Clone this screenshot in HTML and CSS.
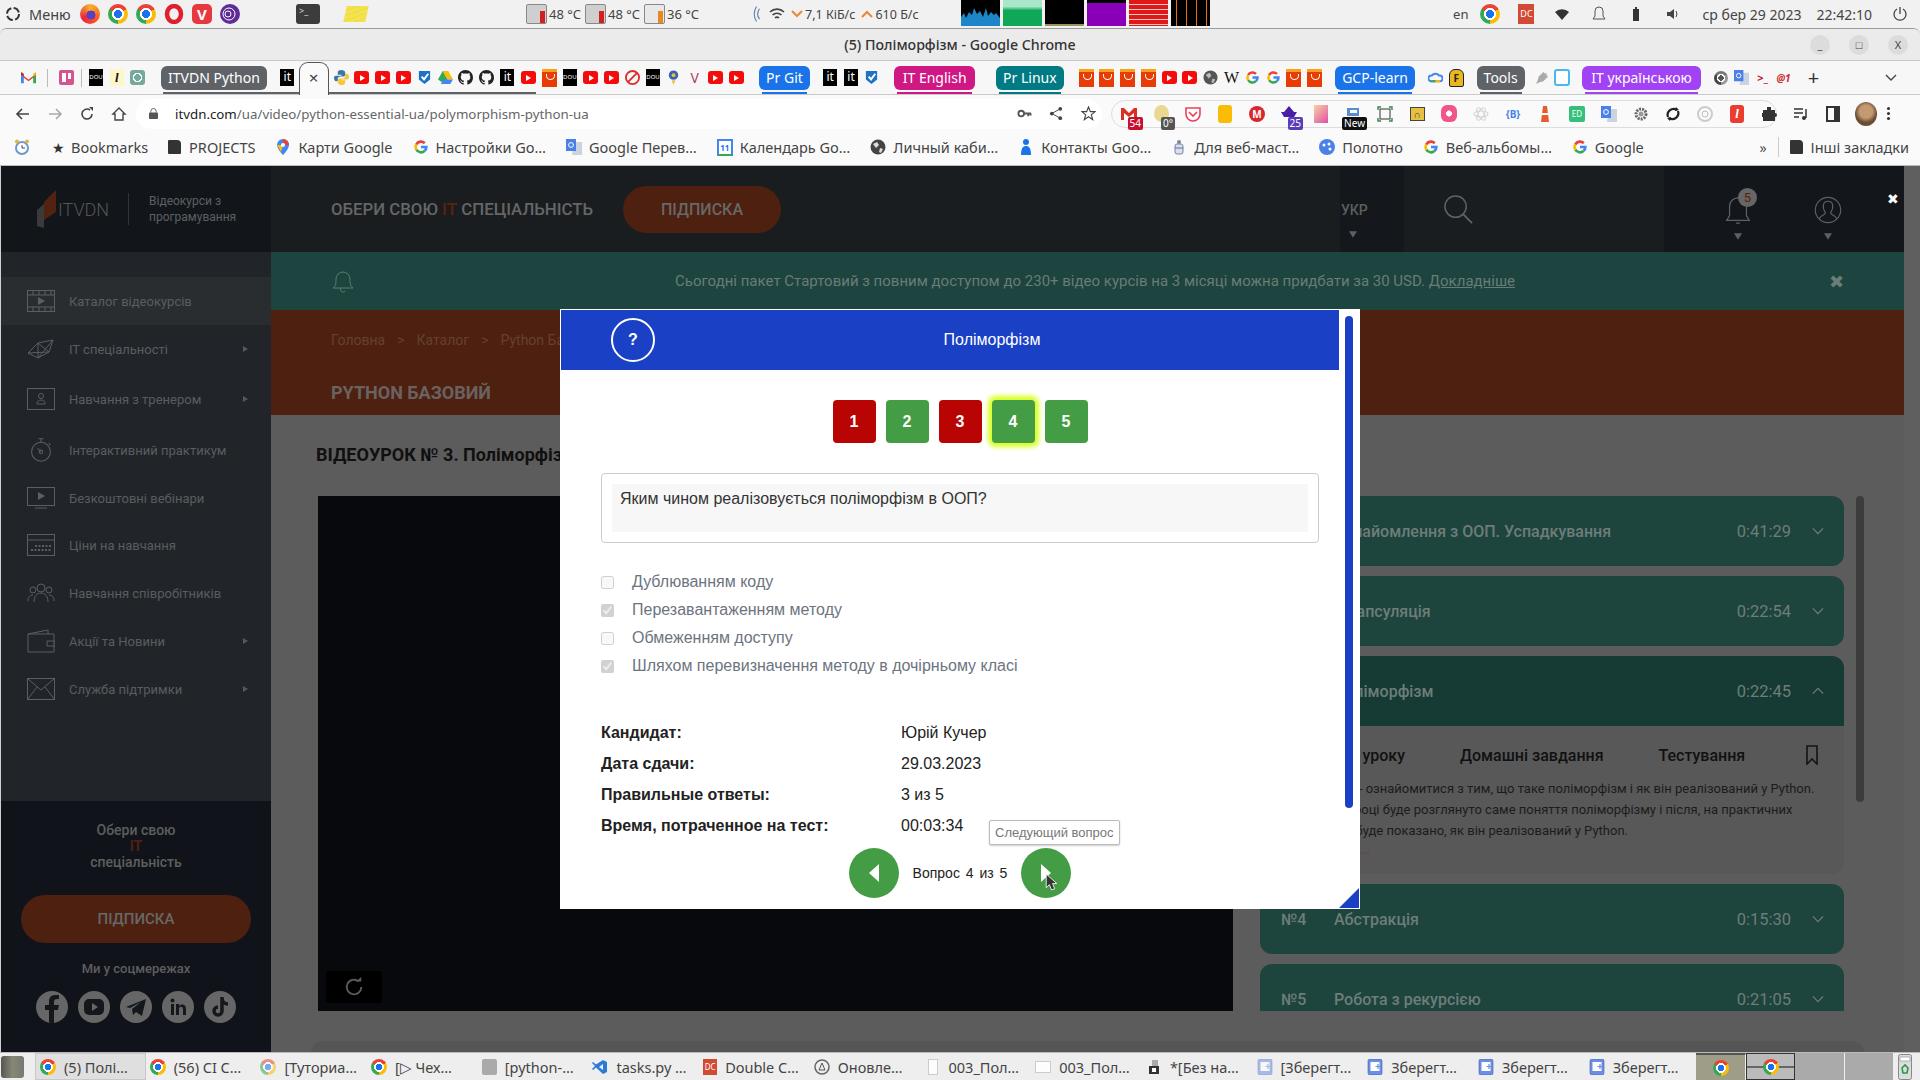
FILE: index.html
```html
<!DOCTYPE html>
<html lang="uk">

<head>
    <meta charset="UTF-8">
    <title>(5) Поліморфізм - Google Chrome</title>
    <link rel="stylesheet" href="styles.css">
</head>

<body>
    <!-- icons used more than once -->
    <svg class="sprite" aria-hidden="true">
        <symbol id="g" viewBox="0 0 24 24">
            <g fill="none" stroke-width="4">
                <path d="M12 12h8a8 8 0 0 1-2.5 5.8" stroke="#4285f4" />
                <path d="M17.5 17.8A8 8 0 0 1 5 16" stroke="#34a853" />
                <path d="M5 16a8 8 0 0 1 0-8" stroke="#fbbc05" />
                <path d="M5 8a8 8 0 0 1 12.6-1.7" stroke="#ea4335" />
            </g>
        </symbol>
        <symbol id="gh" viewBox="0 0 16 16">
            <path fill="#222" d="M8 0C3.58 0 0 3.58 0 8c0 3.54 2.29 6.53 5.47 7.59.4.07.55-.17.55-.38 0-.19-.01-.82-.01-1.49-2.01.37-2.53-.49-2.69-.94-.09-.23-.48-.94-.82-1.13-.28-.15-.68-.52-.01-.53.63-.01 1.08.58 1.23.82.72 1.21 1.87.87 2.33.66.07-.52.28-.87.51-1.07-1.78-.2-3.64-.89-3.64-3.95 0-.87.31-1.59.82-2.15-.08-.2-.36-1.02.08-2.12 0 0 .67-.21 2.2.82.64-.18 1.32-.27 2-.27.68 0 1.36.09 2 .27 1.53-1.04 2.2-.82 2.2-.82.44 1.1.16 1.92.08 2.12.51.56.82 1.27.82 2.15 0 3.07-1.87 3.75-3.65 3.95.29.25.54.73.54 1.48 0 1.07-.01 1.93-.01 2.2 0 .21.15.46.55.38A8.013 8.013 0 0 0 16 8c0-4.42-3.58-8-8-8z" />
        </symbol>
        <symbol id="check" viewBox="0 0 16 16">
            <path fill="#1a73c8" d="M2 1h12v9l-6 5-6-5z" />
            <path fill="none" stroke="#fff" stroke-width="2" d="M5 7l2.5 3L12 4" />
        </symbol>
        <symbol id="trans" viewBox="0 0 16 16">
            <path fill="#ccd3e0" d="M8 3h8v13H6z" />
            <path fill="#4a80e8" d="M0 0h10v12H0z" />
            <circle cx="5" cy="6" r="2.4" fill="none" stroke="#fff" />
        </symbol>
        <symbol id="shot" viewBox="0 0 16 16">
            <rect x="1" y="0" width="14" height="16" rx="2" fill="#6c8ee8" stroke="#46609c" stroke-width=".6" />
            <rect x="3.5" y="3" width="9" height="9" fill="#fff" />
            <path stroke="#6c8ee8" stroke-width="1.2" d="M8.5 7.5h5M11 5v5" />
        </symbol>
        <symbol id="caret" viewBox="0 0 10 8">
            <path fill="#5c6064" d="M0 0h10L5 8z" />
        </symbol>
        <symbol id="chev" viewBox="0 0 14 8">
            <path fill="none" stroke="#6e7f7b" stroke-width="1.4" d="M1 1l6 6 6-6" />
        </symbol>
    </svg>

    <!-- desktop panel -->
    <div class="panel">
        <svg class="mint" viewBox="0 0 16 16">
            <circle cx="8" cy="8" r="6" fill="none" stroke="#333" stroke-width="2" stroke-dasharray="7 2.4" />
        </svg>
        <span class="menu-word">Меню</span>
        <div class="launch">
            <i class="app firefox"></i>
            <i class="chrome big"></i>
            <i class="chrome big"></i>
            <svg class="app" viewBox="0 0 20 20"><ellipse cx="10" cy="10" rx="7" ry="8" fill="none" stroke="#e0202c" stroke-width="4.5" /></svg>
            <span class="app vivaldi">V</span>
            <svg class="app" viewBox="0 0 20 20"><circle cx="10" cy="10" r="10" fill="#5e2b97" /><circle cx="9" cy="10" r="6" fill="none" stroke="#fff" /><circle cx="8" cy="10" r="3" fill="none" stroke="#fff" /></svg>
        </div>
        <span class="term">&gt;_</span>
        <i class="sticky"></i>
        <div class="temps">
            <i class="therm"></i><span>48 °C</span>
            <i class="therm"></i><span>48 °C</span>
            <i class="therm drive"></i><span>36 °C</span>
        </div>
        <div class="net">
            <svg class="wifi-arc" viewBox="0 0 12 24"><path d="M6 2Q0 12 6 22M10 5Q5 12 10 19" fill="none" stroke="#5e7fa8" stroke-width="1.5" /></svg>
            <svg class="wifi" viewBox="0 0 16 16"><path d="M1 6a10 10 0 0 1 14 0M3.5 9a6.5 6.5 0 0 1 9 0M6 12a3 3 0 0 1 4 0" fill="none" stroke="#444" stroke-width="1.6" /></svg>
            <svg class="speed" viewBox="0 0 12 8"><path d="M1 1l5 5 5-5" fill="none" stroke="#e8883a" stroke-width="2" /></svg>
            <span>7,1 КіБ/с</span>
            <svg class="speed" viewBox="0 0 12 8"><path d="M1 7l5-5 5 5" fill="none" stroke="#e8883a" stroke-width="2" /></svg>
            <span>610 Б/с</span>
        </div>
        <div class="graphs">
            <svg class="graph g-cpu" viewBox="0 0 39 26" preserveAspectRatio="none"><path fill="#1c86c8" d="M0 26V17l3-4 2 5 3-6 3 3 2-7 3 6 3-3 3 6 3-9 2 8 3-4 3 3 2-2 4 5v8z" /></svg>
            <i class="graph g-mem"></i>
            <i class="graph g-swap"></i>
            <i class="graph g-load"></i>
            <i class="graph g-net"></i>
            <i class="graph g-disk"></i>
        </div>
        <div class="tray">
            <span class="lang">en</span>
            <i class="chrome big"></i>
            <span class="dc">DC</span>
            <svg class="tray-ic" viewBox="0 0 16 16"><path d="M1 6a10 10 0 0 1 14 0L8 14z" fill="#333" /></svg>
            <svg class="tray-ic" viewBox="0 0 16 16"><path d="M8 1a4 4 0 0 0-4 4v5l-2 3h12l-2-3V5a4 4 0 0 0-4-4z" fill="none" stroke="#555" /></svg>
            <svg class="tray-ic" viewBox="0 0 16 16"><path d="M5 3h6v12H5zM7 1h2v2H7z" fill="#333" /></svg>
            <svg class="tray-ic" viewBox="0 0 16 16"><path d="M2 6h3l4-3v10l-4-3H2z" fill="#444" /><path d="M11 5q2 3 0 6" fill="none" stroke="#444" /></svg>
            <span class="clock-date">ср бер 29 2023</span>
            <span class="clock-time">22:42:10</span>
            <svg class="tray-ic" viewBox="0 0 16 16"><path d="M5 3a6 6 0 1 0 6 0M8 1v7" fill="none" stroke="#444" stroke-width="1.3" /></svg>
        </div>
    </div>

    <!-- browser window -->
    <div class="window">
        <div class="titlebar">
            <span class="win-title">(5) Поліморфізм - Google Chrome</span>
            <div class="win-btns">
                <span class="win-btn">_</span>
                <span class="win-btn">□</span>
                <span class="win-btn">X</span>
            </div>
        </div>

        <div class="tabstrip">
            <span class="fav"><svg viewBox="0 0 16 12"><path fill="#ea4335" d="M0 2l8 6 8-6v2L8 10 0 4z" /><path fill="#4285f4" d="M0 3v9h3V5z" /><path fill="#34a853" d="M16 3v9h-3V5z" /><path fill="#fbbc05" d="M13 2l3-2v3l-3 2z" /><path fill="#c5221f" d="M0 0l3 2v3L0 3z" /></svg></span>
            <i class="sep"></i>
            <span class="fav"><i class="trello"></i></span>
            <i class="sep tight"></i>
            <span class="fav"><i class="dou">DOU</i></span>
            <span class="fav"><i class="lfav">l</i></span>
            <span class="fav"><i class="gpt"></i></span>
            <div class="grp">
                <span class="pill p-grey">ITVDN Python</span>
                <span class="fav"><i class="it">it</i></span>
                <div class="tab-active">×</div>
                <span class="fav"><svg viewBox="0 0 16 16"><path fill="#3b78a8" d="M8 0C5 0 4 1 4 3v2h4v1H2C0 6 0 8 0 9s1 3 2 3h2v-2c0-2 1-3 3-3h3c1 0 2-1 2-2V3c0-2-2-3-4-3z" /><path fill="#f6c838" d="M8 16c3 0 4-1 4-3v-2H8v-1h6c2 0 2-2 2-3s-1-3-2-3h-2v2c0 2-1 3-3 3H6c-1 0-2 1-2 2v2c0 2 2 3 4 3z" /></svg></span>
                <span class="fav"><i class="yt"></i></span>
                <span class="fav"><i class="yt"></i></span>
                <span class="fav"><i class="yt"></i></span>
                <span class="fav"><svg><use href="#check" /></svg></span>
                <span class="fav"><svg viewBox="0 0 16 14"><path fill="#fbbc05" d="M5 0h6l5 9h-6z" /><path fill="#34a853" d="M5 0l5 9-3 5-7-5z" /><path fill="#4285f4" d="M3 14l3-5h10l-3 5z" /></svg></span>
                <span class="fav"><svg><use href="#gh" /></svg></span>
                <span class="fav"><svg><use href="#gh" /></svg></span>
                <span class="fav"><i class="it">it</i></span>
                <span class="fav"><i class="yt"></i></span>
            </div>
            <span class="fav"><i class="ali"></i></span>
            <span class="fav"><i class="dou">DOU</i></span>
            <span class="fav"><i class="yt"></i></span>
            <span class="fav"><i class="yt"></i></span>
            <span class="fav"><svg viewBox="0 0 16 16"><circle cx="8" cy="8" r="7" fill="none" stroke="#d8302c" stroke-width="2" /><path d="M3 13L13 3" stroke="#d8302c" stroke-width="2" /></svg></span>
            <span class="fav"><i class="dou">DOU</i></span>
            <span class="fav"><svg viewBox="0 0 12 16"><circle cx="6" cy="5.5" r="5" fill="#3a64b0" /><circle cx="6" cy="5.5" r="2" fill="#f0c040" /><path fill="#e0c050" d="M4 11h4l-2 5z" /></svg></span>
            <span class="fav"><span class="v-fav">V</span></span>
            <span class="fav"><i class="yt"></i></span>
            <span class="fav"><i class="yt"></i></span>
            <span class="pill p-blue pr-git">Pr Git</span>
            <span class="fav"><i class="it">it</i></span>
            <span class="fav"><i class="it">it</i></span>
            <span class="fav"><svg><use href="#check" /></svg></span>
            <span class="pill p-pink">IT English</span>
            <span class="pill p-teal">Pr Linux</span>
            <span class="fav"><i class="ali"></i></span>
            <span class="fav"><i class="ali"></i></span>
            <span class="fav"><i class="ali"></i></span>
            <span class="fav"><i class="ali"></i></span>
            <span class="fav"><i class="yt"></i></span>
            <span class="fav"><i class="yt"></i></span>
            <span class="fav"><svg viewBox="0 0 16 16"><circle cx="8" cy="8" r="7.5" fill="#555" /><path fill="#bbb" d="M3 5l4-2 2 3-3 3zM10 9l3 1-2 4-2-1z" /></svg></span>
            <span class="fav"><span class="wiki">W</span></span>
            <span class="fav"><svg><use href="#g" /></svg></span>
            <span class="fav"><svg><use href="#g" /></svg></span>
            <span class="fav"><i class="ali"></i></span>
            <span class="fav"><i class="ali"></i></span>
            <span class="pill p-blue">GCP-learn</span>
            <span class="fav"><svg viewBox="0 0 16 16"><path d="M3 12a3 3 0 0 1 1-6 5 5 0 0 1 8 0 3 3 0 0 1 1 6z" fill="none" stroke="#4285f4" stroke-width="2" /><path d="M3 12h5" stroke="#34a853" stroke-width="2" /><path d="M8 12h5" stroke="#fbbc05" stroke-width="2" /></svg></span>
            <span class="fav"><span class="f-fav">F</span></span>
            <span class="pill p-grey tools">Tools</span>
            <span class="fav"><svg viewBox="0 0 16 16"><path fill="#aaa" d="M2 15l2-4 1-4 5-5 2 2 2-1-1 2 2 2-5 5-4 1z" /></svg></span>
            <span class="fav"><i class="note-fav"></i></span>
            <span class="pill p-violet">IT українською</span>
            <span class="fav"><i class="chrome grey"></i></span>
            <span class="fav"><svg><use href="#trans" /></svg></span>
            <span class="fav"><span class="term-fav">&gt;_</span></span>
            <span class="fav"><span class="red-fav">@1</span></span>
            <span class="newtab">+</span>
            <svg class="tab-menu" viewBox="0 0 12 8"><path d="M1 1l5 5 5-5" fill="none" stroke="#444" stroke-width="1.4" /></svg>
        </div>

        <div class="toolbar">
            <svg class="tool" viewBox="0 0 16 16"><path d="M14 8H2M7 3L2 8l5 5" fill="none" stroke="#444" stroke-width="1.6" /></svg>
            <svg class="tool" viewBox="0 0 16 16"><path d="M2 8h12M9 3l5 5-5 5" fill="none" stroke="#aaa" stroke-width="1.6" /></svg>
            <svg class="tool" viewBox="0 0 16 16"><path d="M13 8a5 5 0 1 1-2-4" fill="none" stroke="#444" stroke-width="1.6" /><path d="M10 1h4v4z" fill="#444" /></svg>
            <svg class="tool" viewBox="0 0 16 16"><path d="M8 2L2 8h2v6h8V8h2z" fill="none" stroke="#444" stroke-width="1.4" /></svg>
            <div class="omnibox">
                <svg class="lock" viewBox="0 0 10 12"><path d="M2 5V3.5a3 3 0 0 1 6 0V5" fill="none" stroke="#555" /><rect y="5" width="10" height="7" rx="1" fill="#555" /></svg>
                <span class="url"><b>itvdn.com</b>/ua/video/python-essential-ua/polymorphism-python-ua</span>
                <svg class="omni-ic key" viewBox="0 0 16 16"><circle cx="4.5" cy="8" r="3" fill="none" stroke="#555" stroke-width="2" /><path d="M7 8h8M12 8v3M14.5 8v2" stroke="#555" stroke-width="2" /></svg>
                <svg class="omni-ic" viewBox="0 0 16 16"><circle cx="12" cy="3" r="2" fill="#444" /><circle cx="12" cy="13" r="2" fill="#444" /><circle cx="3" cy="8" r="2" fill="#444" /><path d="M12 3L3 8l9 5" fill="none" stroke="#444" /></svg>
                <svg class="omni-ic" viewBox="0 0 16 16"><path d="M8 1l2 5h5l-4 3.5 1.5 5L8 11.500 3.500 14.500 5 9.500 1 6h5z" fill="none" stroke="#444" stroke-width="1.2" /></svg>
            </div>
            <div class="ext-bar">
                <span class="ext"><svg viewBox="0 0 16 12"><path fill="#d93025" d="M0 0h3l5 5 5-5h3v12h-3V5L8 9 3 5v7H0z" /></svg><em class="badge b-red">54</em></span>
                <span class="ext"><i class="moon"></i><em class="badge b-grey">0°</em></span>
                <span class="ext"><svg viewBox="0 0 16 16"><path d="M1 2h14v6a7 7 0 0 1-14 0z" fill="#fff" stroke="#ef3f56" stroke-width="1.6" /><path d="M4 6l4 4 4-4" fill="none" stroke="#ef3f56" stroke-width="1.6" /></svg></span>
                <span class="ext"><i class="keep"></i></span>
                <span class="ext"><i class="mega">M</i></span>
                <span class="ext"><svg viewBox="0 0 16 16"><path fill="#4a1fa8" d="M8 0l5 6h3l-3 5H3L0 6h3z" /></svg><em class="badge b-violet">25</em></span>
                <span class="ext"><i class="grad"></i></span>
                <span class="ext"><svg viewBox="0 0 16 12"><path fill="#5a8cd0" d="M2 0h12v8H2z" /><path fill="#fff" d="M5 2h7v3H5z" /></svg><em class="badge b-black">New</em></span>
                <span class="ext"><svg viewBox="0 0 16 16"><path d="M1 4V1h3M12 1h3v3M15 12v3h-3M4 15H1v-3" fill="none" stroke="#2a8a4a" stroke-width="1.4" /><rect x="3" y="3" width="10" height="10" fill="none" stroke="#333" /></svg></span>
                <span class="ext"><i class="folder-ext">∩</i></span>
                <span class="ext"><i class="pink-ext"></i></span>
                <span class="ext"><svg viewBox="0 0 16 16"><g fill="none" stroke="#d5d5d5" stroke-width="1.2"><ellipse cx="8" cy="8" rx="7" ry="3" /><ellipse cx="8" cy="8" rx="7" ry="3" transform="rotate(60 8 8)" /><ellipse cx="8" cy="8" rx="7" ry="3" transform="rotate(120 8 8)" /></g></svg></span>
                <span class="ext"><i class="bi-ext">{B}</i></span>
                <span class="ext"><svg viewBox="0 0 12 16"><path fill="#e85a30" d="M4 0h4l2 16H2z" /><path fill="#fff" d="M3 7h6v2H3z" /></svg></span>
                <span class="ext"><i class="ed-ext">ED</i></span>
                <span class="ext"><svg><use href="#trans" /></svg></span>
                <span class="ext"><svg viewBox="0 0 16 16"><circle cx="8" cy="8" r="5" fill="none" stroke="#666" stroke-width="3" stroke-dasharray="2 1" /><circle cx="8" cy="8" r="2.5" fill="#999" /></svg></span>
                <span class="ext"><svg viewBox="0 0 16 16"><path d="M3 11a6 6 0 0 1 9-7M13 5a6 6 0 0 1-9 7" fill="none" stroke="#222" stroke-width="2.2" /><path d="M11 1l3 3-4 1zM5 15l-3-3 4-1z" fill="#222" /></svg></span>
                <span class="ext"><svg viewBox="0 0 16 16"><circle cx="8" cy="8" r="7" fill="none" stroke="#ccc" stroke-width="2" /><circle cx="8" cy="8" r="3" fill="none" stroke="#bbb" /></svg></span>
                <span class="ext"><i class="lfav red">l</i></span>
                <span class="ext"><svg viewBox="0 0 16 16"><path fill="#333" d="M6 1h4v3h4v3a2 2 0 0 1 0 4v4H2v-4H1V7h1V4h4z" /></svg></span>
            </div>
            <svg class="tool-r" viewBox="0 0 16 16"><path d="M1 3h9M1 7h9M1 11h5" stroke="#333" stroke-width="1.5" /><path d="M13 3v9" stroke="#333" stroke-width="1.5" /><circle cx="11" cy="12" r="2" fill="#333" /></svg>
            <i class="side-panel-ic"></i>
            <i class="avatar"></i>
            <i class="dots"></i>
        </div>

        <div class="bookmarks">
            <span class="bm"><svg class="bm-ic" viewBox="0 0 16 16"><circle cx="8" cy="9" r="6" fill="#fff" stroke="#6a9ad0" stroke-width="2" /><path d="M8 6v3h3" stroke="#445" fill="none" /><circle cx="3" cy="2.5" r="2" fill="#e8b040" /><circle cx="13" cy="2.5" r="2" fill="#e8b040" /></svg></span>
            <span class="bm"><span class="bm-star">★</span>Bookmarks</span>
            <span class="bm"><i class="folder"></i>PROJECTS</span>
            <span class="bm"><svg class="bm-ic" viewBox="0 0 12 16"><path d="M6 0a6 6 0 0 0-6 6c0 4 6 10 6 10s6-6 6-10a6 6 0 0 0-6-6z" fill="#4285f4" /><path d="M6 0a6 6 0 0 1 6 6H6z" fill="#ea4335" /><path d="M0 6h6l-2 7z" fill="#fbbc05" /><circle cx="6" cy="6" r="2" fill="#fff" /></svg>Карти Google</span>
            <span class="bm"><svg class="bm-ic"><use href="#g" /></svg>Настройки Go…</span>
            <span class="bm"><svg class="bm-ic"><use href="#trans" /></svg>Google Перев…</span>
            <span class="bm"><i class="cal">11</i>Календарь Go…</span>
            <span class="bm"><svg class="bm-ic" viewBox="0 0 16 16"><circle cx="8" cy="8" r="7.5" fill="#444" /><path fill="#ddd" d="M3 5l4-2 2 3-3 3zM10 9l3 1-2 4-2-1z" /></svg>Личный каби…</span>
            <span class="bm"><svg class="bm-ic" viewBox="0 0 12 16"><circle cx="6" cy="3" r="3" fill="#1a73e8" /><path d="M1 16c0-7 2-9 5-9s5 2 5 9z" fill="#1a73e8" /></svg>Контакты Goo…</span>
            <span class="bm"><svg class="bm-ic" viewBox="0 0 12 16"><rect x="2" y="5" width="8" height="10" rx="2" fill="#dde" stroke="#789" /><circle cx="6" cy="3" r="2" fill="#789" /><path d="M2 9h8" stroke="#47a" /></svg>Для веб-маст…</span>
            <span class="bm"><svg class="bm-ic" viewBox="0 0 16 16"><circle cx="8" cy="8" r="8" fill="#4a80e8" /><circle cx="5" cy="6" r="1.5" fill="#fff" /><circle cx="10" cy="5" r="1.5" fill="#fff" /><circle cx="11" cy="10" r="1.5" fill="#fff" /></svg>Полотно</span>
            <span class="bm"><svg class="bm-ic"><use href="#g" /></svg>Веб-альбомы…</span>
            <span class="bm"><svg class="bm-ic"><use href="#g" /></svg>Google</span>
            <span class="bm-more">»</span>
            <span class="bm bm-other"><i class="folder"></i>Інші закладки</span>
        </div>

        <div class="page">
            <aside class="side">
                <div class="logo">
                    <svg class="logo-mark" viewBox="0 0 20 38"><path fill="#532312" d="M7 12L19 0v22L7 30z" /><path fill="#3a3a3a" d="M0 20l7-6v24l-7-2z" /></svg>
                    <span class="logo-word">ITVDN</span>
                    <i class="logo-line"></i>
                    <span class="logo-sub">Відеокурси з<br>програмування</span>
                </div>
                <nav class="side-nav">
                    <a class="nav-row active"><svg viewBox="0 0 28 22"><g fill="none" stroke="#5b5f63"><rect x=".5" y=".5" width="27" height="21" /><path d="M0 5h28M0 17h28M6 0v5M12 0v5M18 0v5M24 0v5M6 17v5M12 17v5M18 17v5M24 17v5" /></g><path fill="#5b5f63" d="M11 7l7 4-7 4z" /></svg>Каталог відеокурсів</a>
                    <a class="nav-row"><svg viewBox="0 0 28 22"><path fill="none" stroke="#5b5f63" d="M1 15L11 5l15-3-4 12-11 6zM11 5l0 15M11 5l11 9M1 15l21-1M26 2L11 20" /></svg>ІТ спеціальності<i class="nav-arrow"></i></a>
                    <a class="nav-row h52"><svg viewBox="0 0 28 22"><g fill="none" stroke="#5b5f63"><rect x=".5" y=".5" width="27" height="21" /><circle cx="14" cy="8" r="2.5" /><path d="M10 16c0-3 2-4 4-4s4 1 4 4z" /></g></svg>Навчання з тренером<i class="nav-arrow"></i></a>
                    <a class="nav-row h50"><svg viewBox="0 0 28 28"><g fill="none" stroke="#5b5f63" stroke-width="1.2"><circle cx="14" cy="16" r="11" /><path d="M11 1h6M14 1v4M23 6l2 2M14 16l-4-4" /><circle cx="14" cy="16" r="2" /></g></svg>Інтерактивний практикум</a>
                    <a class="nav-row h46"><svg viewBox="0 0 28 22"><g fill="none" stroke="#5b5f63"><rect x=".5" y=".5" width="27" height="18" /><path d="M8 21h12" /></g><path fill="#5b5f63" d="M11 5l7 4-7 4z" /></svg>Безкоштовні вебінари</a>
                    <a class="nav-row"><svg viewBox="0 0 28 22"><g fill="none" stroke="#5b5f63"><rect x=".5" y=".5" width="27" height="21" /><path d="M0 6h28" /><path stroke-dasharray="2 1.5" stroke-width="2" d="M4 16h20M8 12h16" /></g></svg>Ціни на навчання</a>
                    <a class="nav-row"><svg viewBox="0 0 28 22"><g fill="none" stroke="#5b5f63"><circle cx="14" cy="6" r="4" /><circle cx="6" cy="8" r="3" /><circle cx="22" cy="8" r="3" /><path d="M7 20c0-6 3-9 7-9s7 3 7 9M1 19c0-4 2-6 5-6M27 19c0-4-2-6-5-6" /></g></svg>Навчання співробітників</a>
                    <a class="nav-row"><svg viewBox="0 0 28 24"><g fill="none" stroke="#5b5f63"><path d="M1 5h26v18H1zM1 5l20-4v4" /><path d="M20 12h8v5h-8z" /></g></svg>Акції та Новини<i class="nav-arrow"></i></a>
                    <a class="nav-row"><svg viewBox="0 0 28 22"><g fill="none" stroke="#5b5f63"><rect x=".5" y=".5" width="27" height="21" /><path d="M0 0l14 12L28 0M0 22l10-13M28 22L18 9" /></g></svg>Служба підтримки<i class="nav-arrow"></i></a>
                </nav>
                <div class="side-foot">
                    <p class="foot-title">Обери свою<br><b>ІТ</b><br>спеціальність</p>
                    <a class="sub-btn foot-btn">ПІДПИСКА</a>
                    <p class="foot-soc">Ми у соцмережах</p>
                    <div class="socials">
                        <span class="soc"><svg viewBox="0 0 32 32"><path fill="#14181c" d="M18 32V19h4l1-5h-5v-3c0-2 1-3 3-3h2V4h-4c-4 0-6 3-6 6v4H9v5h4v13z" /></svg></span>
                        <span class="soc"><svg viewBox="0 0 32 32"><rect x="6" y="8" width="20" height="16" rx="5" fill="#14181c" /><path fill="#666" d="M14 12l6 4-6 4z" /></svg></span>
                        <span class="soc"><svg viewBox="0 0 32 32"><path fill="#14181c" d="M6 16L26 8l-4 17-6-4-3 3-1-6 9-7-11 6z" /></svg></span>
                        <span class="soc"><svg viewBox="0 0 32 32"><path fill="#14181c" d="M9 13h3v11H9zM14 13h3v2c1-2 7-3 7 3v6h-3v-6c0-3-4-3-4 0v6h-3z" /><circle cx="10.5" cy="9.5" r="2" fill="#14181c" /></svg></span>
                        <span class="soc"><svg viewBox="0 0 32 32"><path fill="none" stroke="#14181c" stroke-width="3.5" d="M18 6v14a4 4 0 1 1-4-4M18 7c0 4 3 6 6 6" /></svg></span>
                    </div>
                </div>
            </aside>

            <main class="main">
                <header class="head">
                    <div class="head-menu">
                        <span class="choose">ОБЕРИ СВОЮ <b>ІТ</b> СПЕЦІАЛЬНІСТЬ</span>
                        <a class="sub-btn head-btn">ПІДПИСКА</a>
                    </div>
                    <div class="head-lang">УКР<svg><use href="#caret" /></svg></div>
                    <div class="head-search"><svg viewBox="0 0 32 32"><circle cx="13" cy="13" r="11" fill="none" stroke="#5e6266" stroke-width="1.5" /><path d="M21 21l9 9" stroke="#5e6266" stroke-width="2" /></svg></div>
                    <div class="head-user">
                        <div class="head-ic"><svg viewBox="0 0 28 32"><path d="M2 27l3-5V12a9 9 0 0 1 18 0v10l3 5zM12 30h4" fill="none" stroke="#5e6266" stroke-width="1.3" /></svg><em class="bell-count">5</em><svg class="ic-caret"><use href="#caret" /></svg></div>
                        <div class="head-ic"><svg viewBox="0 0 32 32"><circle cx="16" cy="16" r="14.5" fill="none" stroke="#5e6266" stroke-width="1.3" /><path d="M6 26c2-5 7-4 7-7-4-6-3-13 3-13s7 7 3 13c0 3 5 2 7 7" fill="none" stroke="#5e6266" stroke-width="1.3" /></svg><svg class="ic-caret"><use href="#caret" /></svg></div>
                    </div>
                </header>
                <div class="notice">
                    <svg class="notice-bell" viewBox="0 0 22 24"><path d="M1 19c3-2 3-5 3-9a7 7 0 0 1 14 0c0 4 0 7 3 9zM9 19a2 2 0 0 0 4 3" fill="none" stroke="#5b7d76" /></svg>
                    <span class="notice-text">Сьогодні пакет Стартовий з повним доступом до 230+ відео курсів на 3 місяці можна придбати за 30 USD. <u>Докладніше</u></span>
                    <span class="notice-x">✖</span>
                </div>
                <div class="hero">
                    <div class="crumbs"><span>Головна</span><span>&gt;</span><span>Каталог</span><span>&gt;</span><span>Python Базовий</span></div>
                    <h2 class="hero-title">PYTHON БАЗОВИЙ</h2>
                </div>
                <div class="content">
                    <h1 class="lesson-title">ВІДЕОУРОК № 3. Поліморфізм</h1>
                    <div class="lesson-row">
                        <div class="video">
                            <div class="replay"><svg viewBox="0 0 22 22"><path d="M19 11a8 8 0 1 1-3-6.2" fill="none" stroke="#5c5c5c" stroke-width="2" /><path d="M13 5h6V0z" fill="#5c5c5c" /></svg></div>
                        </div>
                        <div class="lessons">
                            <div class="lesson"><span class="num">№1</span><span class="name">Ознайомлення з ООП. Успадкування</span><span class="time">0:41:29</span><svg class="chev"><use href="#chev" /></svg></div>
                            <div class="lesson"><span class="num">№2</span><span class="name">Інкапсуляція</span><span class="time">0:22:54</span><svg class="chev"><use href="#chev" /></svg></div>
                            <div class="lesson open"><span class="num">№3</span><span class="name">Поліморфізм</span><span class="time">0:22:45</span><svg class="chev up"><use href="#chev" /></svg></div>
                            <div class="lesson-body">
                                <div class="lesson-tabs">
                                    <span class="first">Опис уроку</span>
                                    <span>Домашні завдання</span>
                                    <span>Тестування</span>
                                    <svg class="mark" viewBox="0 0 12 20"><path d="M1 1h10v18l-5-5-5 5z" fill="none" stroke="#151515" stroke-width="1.6" /></svg>
                                </div>
                                <p class="lesson-desc">Мета уроку - ознайомитися з тим, що таке поліморфізм і як він реалізований у Python.<br>На цьому уроці буде розглянуто саме поняття поліморфізму і після, на практичних<br>прикладах буде показано, як він реалізований у Python.</p>
                                <span class="lesson-more">...</span>
                            </div>
                            <div class="lesson"><span class="num">№4</span><span class="name">Абстракція</span><span class="time">0:15:30</span><svg class="chev"><use href="#chev" /></svg></div>
                            <div class="lesson"><span class="num">№5</span><span class="name">Робота з рекурсією</span><span class="time">0:21:05</span><svg class="chev"><use href="#chev" /></svg></div>
                        </div>
                        <i class="list-scroll"></i>
                    </div>
                    <div class="next-block"></div>
                </div>
            </main>
            <div class="page-scroll"></div>

            <span class="overlay-x">✖</span>

            <!-- test result modal -->
            <section class="modal">
                <div class="modal-head">
                    <span class="help">?</span>
                    <span class="modal-title">Поліморфізм</span>
                </div>
                <div class="modal-body">
                    <div class="steps">
                        <button class="step bad">1</button>
                        <button class="step good">2</button>
                        <button class="step bad">3</button>
                        <button class="step good current">4</button>
                        <button class="step good">5</button>
                    </div>
                    <div class="question">
                        <div class="question-text">Яким чином реалізовується поліморфізм в ООП?</div>
                    </div>
                    <ul class="answers">
                        <li><input type="checkbox" disabled>Дублюванням коду</li>
                        <li><input type="checkbox" disabled checked>Перезавантаженням методу</li>
                        <li><input type="checkbox" disabled>Обмеженням доступу</li>
                        <li><input type="checkbox" disabled checked>Шляхом перевизначення методу в дочірньому класі</li>
                    </ul>
                    <div class="result">
                        <b>Кандидат:</b><span>Юрій Кучер</span>
                        <b>Дата сдачи:</b><span>29.03.2023</span>
                        <b>Правильные ответы:</b><span>3 из 5</span>
                        <b>Время, потраченное на тест:</b><span>00:03:34</span>
                    </div>
                    <div class="pager">
                        <a class="round prev"></a>
                        <span class="pager-text">Вопрос 4 из 5</span>
                        <a class="round next"></a>
                    </div>
                </div>
                <i class="modal-scroll"></i>
                <i class="modal-corner"></i>
                <span class="hint">Следующий вопрос</span>
                <svg class="cursor" viewBox="0 0 12 18"><path d="M1 1v13l3-3 2 5 3-1-2-5h4z" fill="#333" stroke="#fff" stroke-width=".8" /></svg>
            </section>
        </div>
    </div>

    <!-- bottom task bar -->
    <div class="taskbar">
        <i class="show-desktop"></i>
        <div class="tasks">
            <span class="task cur"><i class="chrome"></i><span>(5) Полі…</span></span>
            <span class="task"><i class="chrome"></i><span>(56) CI C…</span></span>
            <span class="task"><i class="chrome pale"></i><span>[Туториа…</span></span>
            <span class="task"><i class="chrome"></i><span>[▷ Чех…</span></span>
            <span class="task"><i class="t-folder"></i><span>[python-…</span></span>
            <span class="task"><svg viewBox="0 0 16 16"><path fill="#2a7ad8" d="M11 1l4 2v10l-4 2-7-6.5-3 2.5-1-1 3-3-3-3 1-1 3 2.5zM11 5L7 8l4 3z" /></svg><span>tasks.py …</span></span>
            <span class="task"><i class="dc small">DC</i><span>Double C…</span></span>
            <span class="task"><svg viewBox="0 0 16 16"><circle cx="8" cy="8" r="7" fill="none" stroke="#666" stroke-width="1.5" /><path d="M8 4l3 7H5z" fill="none" stroke="#555" /></svg><span>Оновле…</span></span>
            <span class="task"><i class="t-file"></i><span>003_Пол…</span></span>
            <span class="task"><i class="t-file wide"></i><span>003_Пол…</span></span>
            <span class="task"><svg viewBox="0 0 16 16"><path fill="#333" d="M3 7h10v8H3z" /><path fill="#aaa" d="M6 1h6v6H6z" /><rect x="6" y="9" width="4" height="4" fill="#fff" /></svg><span>*[Без на…</span></span>
            <span class="task"><svg class="pale-ic"><use href="#shot" /></svg><span>[Зберегт…</span></span>
            <span class="task"><svg><use href="#shot" /></svg><span>Зберегт…</span></span>
            <span class="task"><svg><use href="#shot" /></svg><span>Зберегт…</span></span>
            <span class="task"><svg><use href="#shot" /></svg><span>Зберегт…</span></span>
        </div>
        <div class="spaces">
            <span class="space on"><i class="chrome"></i></span>
            <span class="space grid"><i class="chrome"></i></span>
            <span class="space"></span>
            <span class="space"></span>
        </div>
        <svg class="trash" viewBox="0 0 14 26"><rect x=".5" y=".5" width="13" height="25" rx="2" fill="#ddd" stroke="#888" /><rect x="2" y="3" width="10" height="4" fill="#fff" stroke="#888" stroke-width=".6" /><path d="M4 14l3-3 3 3-1 5H5z" fill="none" stroke="#2a9a4a" stroke-width="1.6" /></svg>
    </div>
</body>

</html>
```

FILE: styles.css
```css
* {
    margin: 0;
    padding: 0;
    box-sizing: border-box;
}

body {
    width: 1920px;
    height: 1080px;
    overflow: hidden;
    display: flex;
    flex-direction: column;
    background-color: #eee;
    font-family: 'Noto Sans', sans-serif;
    font-size: 13px;
    color: #444;
}

i,
em {
    font-style: normal;
    display: block;
}

svg {
    display: block;
}

.sprite {
    display: none;
}

/* desktop panel */
.panel {
    height: 28px;
    flex: none;
    display: flex;
    align-items: center;
    padding-left: 5px;
    background-color: #f1f1f1;
    font-size: 13px;
}

.mint {
    width: 16px;
    height: 16px;
}

.menu-word {
    margin-left: 8px;
    width: 41px;
    font-size: 14.5px;
}

.launch {
    display: flex;
    gap: 8px;
    margin-left: 10px;
}

.app {
    width: 20px;
    height: 20px;
    flex: none;
}

.firefox {
    border-radius: 50%;
    background: radial-gradient(circle at 55% 55%, #5a3fc0 0 28%, transparent 30%), conic-gradient(#f7b22e, #ff5a20, #e8263f, #f7b22e);
}

.vivaldi {
    display: flex;
    align-items: center;
    justify-content: center;
    background-color: #e8383f;
    border-radius: 5px;
    color: #fff;
    font-weight: 700;
    font-size: 15px;
}

/* chrome logo as a conic gradient */
.chrome {
    width: 16px;
    height: 16px;
    flex: none;
    border-radius: 50%;
    background: radial-gradient(circle, #1a73e8 0 27%, #fff 29% 42%, transparent 44%), conic-gradient(#ea4335 0 60deg, #fbbc05 60deg 180deg, #34a853 180deg 300deg, #ea4335 300deg);
}

.chrome.big {
    width: 20px;
    height: 20px;
}

.chrome.pale {
    opacity: 0.55;
}

.chrome.grey {
    width: 14px;
    height: 14px;
    background: radial-gradient(circle, #555 0 27%, #fff 29% 42%, transparent 44%), conic-gradient(#777 0 60deg, #999 60deg 180deg, #444 180deg 300deg, #777 300deg);
}

.term {
    width: 24px;
    height: 20px;
    margin-left: 56px;
    padding-left: 3px;
    background-color: #3c3c3c;
    border-radius: 3px;
    color: #ddd;
    font-size: 9px;
    line-height: 14px;
}

.sticky {
    width: 22px;
    height: 16px;
    margin-left: 25px;
    background: repeating-linear-gradient(160deg, #f6e24c 0 3px, #ece04a 3px 5px);
    transform: skewX(-12deg);
}

.temps {
    display: flex;
    align-items: center;
    margin-left: 159px;
    font-size: 13px;
}

.temps span {
    margin-left: 2px;
    width: 36px;
}

.therm {
    width: 21px;
    height: 20px;
    border: 1px solid #888;
    border-radius: 2px;
    background: linear-gradient(#d02020, #d02020) 13px 6px / 5px 12px no-repeat, #cfcfcf;
}

.therm.drive {
    background: linear-gradient(#e88820, #e88820) 13px 6px / 5px 12px no-repeat, #e8e8e8;
}

.net {
    display: flex;
    align-items: center;
    margin-left: 49px;
    width: 204px;
    font-size: 12.5px;
}

.wifi-arc {
    width: 9px;
    height: 24px;
}

.wifi {
    width: 16px;
    height: 16px;
    margin-left: 8px;
}

.speed {
    width: 12px;
    height: 8px;
    margin: 0 2px 0 6px;
}

.graphs {
    display: flex;
    gap: 3px;
    margin-left: 5px;
    height: 26px;
    align-self: flex-start;
}

.graph {
    width: 39px;
    height: 26px;
    background-color: #000;
}

.g-mem {
    background: linear-gradient(#a8e8c8 0 25%, #10a858 40%);
}

.g-swap {
    background: linear-gradient(#000 0 92%, #a09060 92%);
}

.g-load {
    background: linear-gradient(#000 0 12%, #8a00b8 12%);
}

.g-net {
    background: repeating-linear-gradient(#e01818 0 4px, #f8c8c8 4px 5px);
}

.g-disk {
    background: repeating-linear-gradient(90deg, #000 0 5px, #e87010 5px 6px, #000 6px 10px);
}

.tray {
    display: flex;
    align-items: center;
    margin-left: auto;
    padding-right: 12px;
    font-size: 14px;
}

.lang {
    margin-right: 12px;
    font-size: 13px;
}

.dc {
    width: 16px;
    height: 20px;
    margin: 0 20px 0 18px;
    background-color: #d24a34;
    color: #fff;
    font-size: 9px;
    line-height: 20px;
    text-align: center;
}

.tray-ic {
    width: 16px;
    height: 16px;
    margin-right: 21px;
}

.clock-time {
    margin: 0 20px 0 15px;
}

.clock-time+.tray-ic {
    margin-right: 0;
}

/* browser window */
.window {
    height: 1024px;
    flex: none;
    display: flex;
    flex-direction: column;
    background-color: #fafafa;
    border-top: 1px solid #999;
    border-radius: 7px 7px 0 0;
    overflow: hidden;
}

.titlebar {
    height: 32px;
    flex: none;
    position: relative;
    display: flex;
    align-items: center;
    justify-content: center;
    background-color: #ebebeb;
    border-bottom: 1px solid #c9c9c9;
}

.win-title {
    font-weight: 500;
    font-size: 14.2px;
    color: #333;
}

.win-btns {
    position: absolute;
    right: 12px;
    top: 6px;
    display: flex;
    gap: 19px;
}

.win-btn {
    width: 20px;
    height: 20px;
    border-radius: 50%;
    background-color: #dcdcdc;
    color: #444;
    font-size: 11px;
    line-height: 20px;
    text-align: center;
}

.tabstrip {
    height: 34px;
    flex: none;
    display: flex;
    align-items: center;
    padding-left: 18px;
    background-color: #f7f7f7;
    border-bottom: 1px solid #c9c9c9;
}

.fav {
    width: 20.8px;
    height: 100%;
    flex: none;
    display: flex;
    align-items: center;
    justify-content: center;
}

.fav svg {
    width: 15px;
    height: 15px;
}

.sep {
    width: 1px;
    height: 18px;
    flex: none;
    margin: 0 8px;
    background-color: #bbb;
}

.sep.tight {
    margin: 0 4px;
}

.trello {
    width: 15px;
    height: 15px;
    border-radius: 2px;
    background: linear-gradient(#fff, #fff) 3px 3px / 4px 9px no-repeat, linear-gradient(#fff, #fff) 9px 3px / 3px 6px no-repeat, #d4558e;
}

.dou {
    width: 14px;
    height: 17px;
    background-color: #000;
    color: #fff;
    font-size: 6px;
    line-height: 17px;
    text-align: center;
    overflow: hidden;
}

.lfav {
    width: 14px;
    height: 17px;
    background-color: #fdf6c8;
    color: #111;
    font-family: 'Liberation Serif', serif;
    font-style: italic;
    font-weight: 700;
    font-size: 13px;
    line-height: 17px;
    text-align: center;
}

.lfav.red {
    height: 18px;
    border-radius: 3px;
    background-color: #ea3c30;
    color: #fff;
}

.gpt {
    width: 15px;
    height: 15px;
    border-radius: 3px;
    background: radial-gradient(circle, #74aa9c 0 30%, #fff 32% 42%, #74aa9c 44%);
}

.pill {
    height: 24px;
    flex: none;
    position: relative;
    margin: 0 10px;
    padding: 0 7px;
    border-radius: 6px;
    color: #fff;
    font-size: 14px;
    line-height: 24px;
}

.pill::after {
    content: "";
    position: absolute;
    left: 3px;
    right: 3px;
    bottom: -4px;
    height: 2px;
    background-color: inherit;
}

.p-grey {
    background-color: #5f6368;
}

.p-blue {
    background-color: #1a73e8;
}

.pr-git {
    margin-left: 12.5px;
}

.p-pink {
    margin-left: 12px;
    padding: 0 8.5px;
    background-color: #d01884;
}

.p-teal {
    margin: 0 12px 0 11px;
    background-color: #007b83;
}

.p-violet {
    padding: 0 9px;
    background-color: #a142f4;
}

.tools {
    margin-right: 6px;
}

.grp {
    height: 100%;
    position: relative;
    display: flex;
    align-items: center;
    margin-left: 3px;
}

.grp::after {
    content: "";
    position: absolute;
    left: 12px;
    right: 3px;
    bottom: 0;
    height: 2px;
    background-color: #5f6368;
}

.it {
    width: 14px;
    height: 17px;
    background-color: #000;
    color: #fff;
    font-size: 12px;
    line-height: 16px;
    text-align: center;
}

.tab-active {
    width: 30px;
    height: 33px;
    flex: none;
    position: relative;
    z-index: 1;
    margin: 1px 2px 0 1px;
    background-color: #fafafa;
    border: 1.5px solid #555;
    border-bottom: none;
    border-radius: 9px 9px 0 0;
    font-size: 17px;
    line-height: 30px;
    text-align: center;
}

.yt {
    width: 15px;
    height: 13px;
    position: relative;
    border-radius: 3px;
    background-color: #f40c0c;
}

.yt::after {
    content: "";
    position: absolute;
    left: 5.5px;
    top: 3.5px;
    border-left: 5px solid #fff;
    border-top: 3px solid transparent;
    border-bottom: 3px solid transparent;
}

.ali {
    width: 15px;
    height: 18px;
    position: relative;
    background: linear-gradient(#f6a21e 0 3px, #e83c06 3px);
}

.ali::after {
    content: "";
    position: absolute;
    left: 4px;
    top: 5px;
    width: 7px;
    height: 5px;
    border: 1px solid #fff;
    border-top: none;
    border-radius: 0 0 5px 5px;
}

.v-fav {
    color: #b04060;
    font-size: 14px;
}

.wiki {
    font-family: 'Liberation Serif', serif;
    font-size: 16px;
    color: #111;
}

.f-fav {
    width: 15px;
    height: 18px;
    background-color: #e8b820;
    border: 1px solid #222;
    border-radius: 6px 6px 2px 2px;
    color: #222;
    font-weight: 700;
    font-size: 10px;
    line-height: 16px;
    text-align: center;
}

.note-fav {
    width: 16px;
    height: 17px;
    border: 2px solid #4ab8e8;
    border-radius: 3px;
    background-color: #fff;
}

.term-fav {
    color: #c02020;
    font-weight: 700;
    font-size: 11px;
}

.red-fav {
    color: #d02828;
    font-style: italic;
    font-weight: 700;
    font-size: 10px;
}

.newtab {
    margin-left: 14px;
    color: #333;
    font-size: 20px;
}

.tab-menu {
    width: 12px;
    height: 8px;
    margin: 0 23px 0 auto;
}

.toolbar {
    height: 37px;
    flex: none;
    display: flex;
    align-items: center;
    padding-left: 15px;
    background-color: #fafafa;
}

.tool {
    width: 16px;
    height: 16px;
    flex: none;
    margin-right: 16px;
}

.omnibox {
    width: 966px;
    height: 30px;
    flex: none;
    display: flex;
    align-items: center;
    margin-left: -7px;
    padding-left: 13px;
    border-radius: 15px;
    background-color: #fff;
}

.lock {
    width: 9px;
    height: 11px;
}

.url {
    margin-left: 17px;
    flex: 1;
    font-size: 13.3px;
    color: #666;
    white-space: nowrap;
}

.url b {
    font-weight: 400;
    color: #222;
}

.omni-ic {
    width: 15px;
    height: 15px;
    margin-right: 17px;
}

.omni-ic:last-child {
    margin-right: 6px;
}

.ext-bar {
    width: 666px;
    height: 28px;
    flex: none;
    display: flex;
    align-items: center;
    margin-left: 9px;
    padding-left: 1px;
    border: 1px solid #ddd;
    border-radius: 14px;
}

.ext {
    width: 32px;
    height: 100%;
    flex: none;
    position: relative;
    display: flex;
    align-items: center;
    justify-content: center;
}

.ext svg {
    width: 16px;
    height: 16px;
}

.badge {
    position: absolute;
    right: 2px;
    bottom: -3px;
    padding: 0 2px;
    border-radius: 2px;
    color: #fff;
    font-size: 10px;
    line-height: 13px;
}

.b-red {
    background-color: #c8102e;
}

.b-grey {
    background-color: #555;
}

.b-violet {
    background-color: #5b3cb8;
}

.b-black {
    background-color: #111;
}

.moon {
    width: 15px;
    height: 17px;
    border-radius: 50%;
    background-color: #e8d890;
}

.keep {
    width: 14px;
    height: 18px;
    border-radius: 3px;
    background-color: #fbbc05;
}

.mega {
    width: 16px;
    height: 16px;
    border-radius: 50%;
    background-color: #d9272e;
    color: #fff;
    font-weight: 700;
    font-size: 10px;
    line-height: 16px;
    text-align: center;
}

.grad {
    width: 14px;
    height: 18px;
    background: linear-gradient(135deg, #f8d0a0, #e050a8);
}

.folder-ext {
    width: 15px;
    height: 14px;
    background-color: #e8c040;
    border: 1px solid #444;
    font-size: 10px;
    line-height: 12px;
    text-align: center;
}

.pink-ext {
    width: 16px;
    height: 17px;
    border-radius: 6px;
    background: radial-gradient(circle, #fff 0 25%, #f0568c 27%);
}

.bi-ext {
    color: #4a80e8;
    font-weight: 700;
    font-size: 10px;
}

.ed-ext {
    width: 16px;
    height: 16px;
    border-radius: 2px;
    background-color: #35bf78;
    color: #fff;
    font-size: 8px;
    line-height: 16px;
    text-align: center;
}

.tool-r {
    width: 16px;
    height: 16px;
    margin-left: 16px;
}

.side-panel-ic {
    width: 14px;
    height: 16px;
    margin-left: 17px;
    border: 2px solid #333;
    border-right-width: 6px;
}

.avatar {
    width: 22px;
    height: 24px;
    margin-left: 15px;
    border-radius: 50%;
    background: radial-gradient(circle at 50% 40%, #c49a70 0 35%, #6a4c30 60%);
}

.dots {
    width: 3px;
    height: 3px;
    margin-left: 10px;
    border-radius: 50%;
    background-color: #333;
    box-shadow: 0 -5px 0 #333, 0 5px 0 #333;
}

.bookmarks {
    height: 34px;
    flex: none;
    display: flex;
    align-items: center;
    padding: 0 0 3px 14px;
    background-color: #fafafa;
    border-bottom: 1px solid #bbb;
    font-size: 14.5px;
    white-space: nowrap;
}

.bm {
    display: flex;
    align-items: center;
    margin-right: 20px;
}

.bm:first-child {
    margin-right: 22px;
}

.bm-ic {
    width: 16px;
    height: 16px;
    margin-right: 7px;
}

.bm:first-child .bm-ic {
    margin-right: 0;
}

.bm-star {
    margin-right: 6px;
    color: #333;
    font-size: 14px;
}

.folder {
    width: 13px;
    height: 14px;
    margin-right: 8px;
    background-color: #333;
    border-radius: 1px 4px 1px 1px;
}

.cal {
    width: 16px;
    height: 17px;
    margin-right: 7px;
    background-color: #fff;
    border: 2px solid #4285f4;
    border-bottom-color: #34a853;
    color: #1a73e8;
    font-size: 8px;
    font-weight: 700;
    line-height: 13px;
    text-align: center;
}

.bm-more {
    margin-left: auto;
    margin-right: 11px;
    color: #555;
    font-size: 14px;
}

.bm-other {
    margin-right: 11px;
    padding-left: 11px;
    border-left: 1px solid #ccc;
}

/* the page behind the dark overlay */
.page {
    flex: 1;
    min-height: 0;
    position: relative;
    display: flex;
    border-left: 1px solid #cfcfcf;
    background-color: #5c5c5c;
    font-family: 'Roboto', sans-serif;
    color: #686868;
}

.side {
    width: 270px;
    flex: none;
    display: flex;
    flex-direction: column;
    background-color: #212529;
}

.logo {
    height: 86px;
    flex: none;
    display: flex;
    align-items: center;
    padding-left: 36px;
    background-color: #12161a;
}

.logo-mark {
    width: 20px;
    height: 38px;
}

.logo-word {
    margin-left: 1px;
    width: 70px;
    color: #555;
    font-weight: 300;
    font-size: 18px;
}

.logo-line {
    width: 1px;
    height: 32px;
    background-color: #30343a;
}

.logo-sub {
    margin-left: 20px;
    color: #5c6064;
    font-size: 12px;
    line-height: 16px;
}

.side-nav {
    flex: 1;
    padding-top: 25px;
}

.nav-row {
    height: 48px;
    display: flex;
    align-items: center;
    padding-left: 26px;
    color: #595d61;
    font-size: 13px;
}

.nav-row svg {
    width: 28px;
    height: 24px;
    margin-right: 14px;
}

.nav-row.active {
    background-color: #2a2d30;
}

.h52 {
    height: 52px;
}

.h50 {
    height: 50px;
}

.h46 {
    height: 46px;
}

.nav-arrow {
    margin: 0 23px 0 auto;
    border-left: 5px solid #55595d;
    border-top: 3.5px solid transparent;
    border-bottom: 3.5px solid transparent;
}

.side-foot {
    height: 251px;
    flex: none;
    padding-top: 21px;
    background-color: #10141a;
    text-align: center;
    color: #5e5e5e;
}

.foot-title {
    font-weight: 500;
    font-size: 14px;
    line-height: 16px;
}

.foot-title b {
    color: #502010;
    font-weight: 700;
}

.sub-btn {
    display: block;
    background-color: #4d2010;
    border-radius: 24px;
    color: #686868;
    font-weight: 500;
    font-size: 16px;
    text-align: center;
}

.foot-btn {
    width: 230px;
    height: 48px;
    margin: 25px auto 0;
    font-size: 15px;
    line-height: 48px;
}

.foot-soc {
    margin-top: 18px;
    font-weight: 500;
    font-size: 13px;
    line-height: 16px;
}

.socials {
    display: flex;
    justify-content: center;
    gap: 10px;
    margin-top: 14px;
}

.soc {
    width: 32px;
    height: 32px;
    border-radius: 50%;
    background-color: #666;
    overflow: hidden;
}

.main {
    flex: 1;
    min-width: 0;
    display: flex;
    flex-direction: column;
}

.head {
    height: 86px;
    flex: none;
    display: flex;
    background-color: #191d20;
}

.head-menu {
    width: 1069px;
    flex: none;
    display: flex;
    align-items: center;
    padding-left: 60px;
}

.choose {
    font-weight: 500;
    font-size: 16.8px;
    color: #666;
}

.choose b {
    color: #55230f;
    font-weight: 700;
}

.head-btn {
    width: 158px;
    height: 47px;
    margin-left: 30px;
    line-height: 47px;
}

.head-lang {
    width: 64px;
    flex: none;
    padding: 36px 0 0 1px;
    background-color: #14181c;
    font-weight: 500;
    font-size: 14px;
    color: #5e5e5e;
}

.head-lang svg {
    width: 8px;
    height: 7px;
    margin: 13px 0 0 8px;
}

.head-search {
    width: 260px;
    flex: none;
    padding: 28px 0 0 39px;
}

.head-search svg {
    width: 31px;
    height: 31px;
}

.head-user {
    flex: 1;
    display: flex;
    gap: 62px;
    padding-left: 60px;
    background-color: #13171c;
}

.head-ic {
    width: 28px;
    position: relative;
    padding-top: 29px;
}

.head-ic svg {
    width: 28px;
    height: 30px;
}

.head-ic .ic-caret {
    width: 8px;
    height: 7px;
    margin: 8px auto 0;
}

.bell-count {
    position: absolute;
    left: 14px;
    top: 22px;
    width: 19px;
    height: 19px;
    border-radius: 50%;
    background-color: #666;
    color: #55230f;
    font-size: 13px;
    line-height: 19px;
    text-align: center;
}

.notice {
    height: 58px;
    flex: none;
    display: flex;
    align-items: center;
    background-color: #1d443e;
    color: #687d78;
    font-size: 15px;
}

.notice-bell {
    width: 22px;
    height: 24px;
    margin-left: 61px;
}

.notice-text {
    margin-left: 321px;
    white-space: nowrap;
}

.notice-x {
    margin-left: 314px;
    color: #6a7d78;
    font-size: 18px;
}

.hero {
    height: 105px;
    flex: none;
    padding: 20px 0 0 60px;
    background-color: #4d2010;
}

.crumbs {
    display: flex;
    gap: 12px;
    font-size: 14px;
    line-height: 20px;
    color: #66402f;
}

.hero-title {
    margin-top: 33px;
    font-weight: 700;
    font-size: 18px;
    line-height: 20px;
    color: #6a6260;
}

.content {
    flex: 1;
    min-height: 0;
    overflow: hidden;
    padding-left: 47px;
}

.lesson-title {
    height: 81px;
    margin-left: -2px;
    font-weight: 700;
    font-size: 18px;
    line-height: 80px;
    color: #101010;
}

.lesson-row {
    height: 515px;
    display: flex;
}

.video {
    width: 915px;
    flex: none;
    display: flex;
    align-items: flex-end;
    padding: 0 0 8px 8px;
    background-color: #07090c;
}

.replay {
    width: 56px;
    height: 32px;
    display: flex;
    align-items: center;
    justify-content: center;
    border-radius: 3px;
    background-color: #000;
}

.replay svg {
    width: 20px;
    height: 20px;
}

.lessons {
    width: 584px;
    flex: none;
    margin-left: 27px;
    overflow: hidden;
}

.lesson {
    height: 70px;
    display: flex;
    align-items: center;
    margin-bottom: 10px;
    padding: 0 20px 0 21px;
    border-radius: 12px;
    background-color: #1e443e;
    color: #6d7d79;
    font-weight: 500;
    font-size: 16px;
}

.lesson.open {
    margin-bottom: 0;
    border-radius: 12px 12px 0 0;
    background-color: #163a34;
}

.num {
    width: 53px;
    flex: none;
}

.name {
    flex: 1;
}

.time {
    font-weight: 400;
    font-size: 16.5px;
}

.chev {
    width: 12px;
    height: 8px;
    margin-left: 21px;
}

.chev.up {
    transform: rotate(180deg);
}

.lesson-body {
    height: 148px;
    margin-bottom: 10px;
    padding: 16px 26px 0 21px;
    border-radius: 0 0 12px 12px;
    background-color: #585858;
}

.lesson-tabs {
    display: flex;
    align-items: center;
    gap: 55px;
    color: #111;
    font-weight: 500;
    font-size: 16px;
    height: 26px;
}

.lesson-tabs .first {
    width: 124px;
    text-align: right;
}

.mark {
    width: 12px;
    height: 20px;
    margin-left: auto;
}

.lesson-desc {
    margin: 10px 0 0 6px;
    color: #1c1c1c;
    font-size: 13px;
    line-height: 21px;
    white-space: nowrap;
}

.lesson-more {
    display: block;
    margin-left: 79px;
    color: #6e3a2a;
    font-size: 13px;
    line-height: 18px;
}

.list-scroll {
    width: 8px;
    height: 306px;
    flex: none;
    margin-left: 12px;
    border-radius: 4px;
    background-color: #3c3c3c;
}

.next-block {
    height: 30px;
    width: 1553px;
    margin: 30px 0 0 -7px;
    border-radius: 12px 12px 0 0;
    background-color: #555;
}

.page-scroll {
    width: 16px;
    flex: none;
    background-color: #5f5f5f;
}

.overlay-x {
    position: absolute;
    left: 1886px;
    top: 25px;
    color: #fff;
    font-size: 14px;
}

/* modal */
.modal {
    position: absolute;
    left: 559px;
    top: 143px;
    width: 800px;
    height: 600px;
    padding: 1px 21px 0 1px;
    background-color: #fff;
    font-family: 'Liberation Sans', sans-serif;
    font-size: 16px;
    color: #222;
}

.modal-head {
    height: 60px;
    display: flex;
    align-items: center;
    padding-left: 50px;
    background-color: #1a40c6;
    color: #fff;
}

.help {
    width: 44px;
    height: 44px;
    flex: none;
    border: 2px solid #fff;
    border-radius: 50%;
    font-weight: 700;
    font-size: 16px;
    line-height: 40px;
    text-align: center;
}

.modal-title {
    flex: 1;
    padding-right: 10px;
    text-align: center;
}

.modal-body {
    padding: 30px 20px 0 40px;
}

.steps {
    display: flex;
    justify-content: center;
    gap: 10px;
}

.step {
    width: 43px;
    height: 43px;
    border: none;
    border-radius: 4px;
    color: #fff;
    font-family: 'Liberation Sans', sans-serif;
    font-weight: 700;
    font-size: 16px;
}

.bad {
    background-color: #b90404;
}

.good {
    background-color: #449d44;
}

.current {
    box-shadow: 0 0 5px 4px #d6ff1e;
}

.question {
    height: 70px;
    margin-top: 30px;
    padding: 10px;
    border: 1px solid #ccc;
    border-radius: 4px;
}

.question-text {
    height: 48px;
    padding: 5px 8px;
    background-color: #f7f7f7;
    line-height: 20px;
    color: #333;
}

.answers {
    margin-top: 25px;
    list-style: none;
    color: #6d7480;
}

.answers li {
    height: 28px;
    display: flex;
    align-items: center;
}

.answers input {
    width: 13px;
    height: 13px;
    margin-right: 18px;
}

.result {
    display: grid;
    grid-template-columns: 300px 1fr;
    grid-auto-rows: 31px;
    align-items: center;
    margin-top: 37px;
}

.pager {
    display: flex;
    align-items: center;
    justify-content: center;
    gap: 14px;
    margin-top: 7px;
}

.pager-text {
    font-size: 14px;
    word-spacing: 2px;
}

.round {
    width: 50px;
    height: 50px;
    display: flex;
    align-items: center;
    justify-content: center;
    border-radius: 50%;
    background-color: #449d44;
}

.prev::before {
    content: "";
    border-right: 10px solid #fff;
    border-top: 9px solid transparent;
    border-bottom: 9px solid transparent;
}

.next::before {
    content: "";
    border-left: 10px solid #fff;
    border-top: 9px solid transparent;
    border-bottom: 9px solid transparent;
}

.modal-scroll {
    position: absolute;
    left: 785px;
    top: 7px;
    width: 8px;
    height: 492px;
    border-radius: 4px;
    background-color: #1a40c6;
}

.modal-corner {
    position: absolute;
    right: 1px;
    bottom: 1px;
    border-right: 20px solid #1a40c6;
    border-top: 20px solid transparent;
}

.hint {
    position: absolute;
    left: 429px;
    top: 511px;
    padding: 0 5px;
    border: 1px solid #bbb;
    border-radius: 2px;
    background-color: #fff;
    box-shadow: 0 1px 2px rgba(0, 0, 0, 0.2);
    color: #777;
    font-size: 13px;
    line-height: 23px;
}

.cursor {
    position: absolute;
    left: 485px;
    top: 564px;
    width: 13px;
    height: 19px;
}

/* task bar */
.taskbar {
    height: 28px;
    flex: none;
    display: flex;
    align-items: center;
    background-color: #eee;
    border-top: 1px solid #bbb;
    font-size: 14.5px;
    white-space: nowrap;
}

.show-desktop {
    width: 23px;
    height: 22px;
    flex: none;
    margin: 0 11px 0 1px;
    border-radius: 3px;
    background: linear-gradient(90deg, #555, #888875, #777);
}

.tasks {
    display: grid;
    grid-template-columns: repeat(15, 110.7px);
    height: 100%;
}

.task {
    display: flex;
    align-items: center;
    gap: 8px;
    padding-left: 4px;
    overflow: hidden;
}

.task.cur {
    background-color: #dfdfdf;
    border: 1px solid #c8c8c8;
}

.task svg {
    width: 16px;
    height: 16px;
    flex: none;
}

.pale-ic {
    opacity: 0.55;
}

.t-folder {
    width: 15px;
    height: 16px;
    flex: none;
    border-radius: 2px;
    background-color: #aaa;
}

.t-file {
    width: 10px;
    height: 16px;
    flex: none;
    margin: 0 3px;
    background-color: #fdfdfd;
    border: 1px solid #ccc;
}

.t-file.wide {
    width: 16px;
    height: 12px;
    margin: 0;
}

.dc.small {
    width: 14px;
    height: 16px;
    margin: 0;
    flex: none;
    line-height: 16px;
    font-size: 8px;
}

.spaces {
    display: flex;
    height: 100%;
    margin-left: 1px;
}

.space {
    width: 49.5px;
    display: flex;
    align-items: center;
    justify-content: center;
    background-color: #aaa;
    border-right: 1px solid #eee;
}

.space.on {
    background-color: #9e9e88;
    border-top: 2px solid #555;
}

.space.grid {
    background: linear-gradient(#666, #666) 0 50% / 100% 2px no-repeat, #bbb;
    border: 1px solid #333;
}

.trash {
    width: 14px;
    height: 26px;
    margin-left: 4px;
}
```
